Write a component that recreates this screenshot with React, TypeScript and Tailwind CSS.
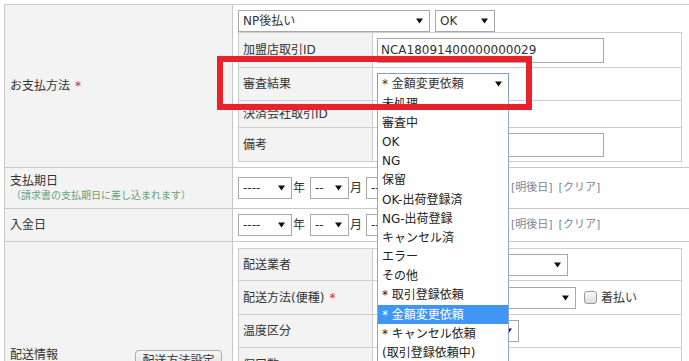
import React from 'react';

type SelectProps = { value: string; className?: string; focused?: boolean };

const Select: React.FC<SelectProps> = ({ value, className = '', focused = false }) => {
  return (
    <div
      className={`flex h-[22px] shrink-0 items-center justify-between bg-white pl-[4px] pr-[6px] border ${
        focused ? 'border-[#7c9fd6]' : 'border-[#a8a8a8]'
      } ${className}`}
    >
      <span className="overflow-hidden whitespace-nowrap">{value}</span>
      <svg width="7" height="6" viewBox="0 0 7 6" className="shrink-0">
        <path d="M0 0.5h7L3.5 5.5z" fill="#111" />
      </svg>
    </div>
  );
};

const Req = () => <span className="ml-[5px] text-[#e3212b]">*</span>;

type RowProps = { label: string; req?: boolean; h: string; children?: React.ReactNode };

const NRow: React.FC<RowProps> = ({ label, req, h, children }) => {
  return (
    <div className={`grid grid-cols-[134px_1fr] ${h}`}>
      <div className="flex items-center border-b border-r border-[#cdcdcd] bg-[#f2f3f2] pl-[4px]">
        {label}
        {req && <Req />}
      </div>
      <div className="flex items-center border-b border-r border-[#cdcdcd] pl-[4px]">{children}</div>
    </div>
  );
};

const DateRow = () => (
  <div className="flex items-center pl-[5px]">
    <div className="flex w-[273px] shrink-0 items-center overflow-hidden whitespace-nowrap">
      <Select value="----" className="w-[54px]" />
      <span className="ml-[1px]">年</span>
      <Select value="--" className="ml-[5px] w-[39px]" />
      <span className="ml-[1px]">月</span>
      <Select value="--" className="ml-[4px] w-[39px]" />
      <span className="ml-[1px]">日</span>
    </div>
    <span className="text-[11px] text-[#7a8497]">[明後日]</span>
    <span className="ml-[6px] text-[11px] text-[#7a8497]">[クリア]</span>
  </div>
);

const options = [
  '未処理',
  '審査中',
  'OK',
  'NG',
  '保留',
  'OK-出荷登録済',
  'NG-出荷登録',
  'キャンセル済',
  'エラー',
  'その他',
  '* 取引登録依頼',
  '* 金額変更依頼',
  '* キャンセル依頼',
  '(取引登録依頼中)',
];

export default function App() {
  return (
    <div className="relative h-[361px] w-[689px] overflow-hidden bg-white font-['DejaVu_Sans','Noto_Sans_CJK_JP',sans-serif] text-[12px] text-[#333]">
      <div className="ml-[4px] mt-[4px] w-[690px] border-l border-t border-[#c8c8c8]">
        {/* お支払方法 */}
        <div className="grid grid-cols-[228px_1fr]">
          <div className="flex items-center border-b border-r border-[#c8c8c8] bg-[#f2f3f2] pl-[5px]">
            お支払方法
            <Req />
          </div>
          <div className="border-b border-[#c8c8c8] px-[5px] py-[5px]">
            <div className="flex gap-[5px]">
              <Select value="NP後払い" className="w-[192px]" />
              <Select value="OK" className="w-[60px]" />
            </div>
            <div className="w-[444px] border-l border-t border-[#cdcdcd]">
              <NRow label="加盟店取引ID" h="h-[35px]">
                <div className="flex h-[25px] w-[227px] items-center border border-[#a8a8a8] pl-[3px]">
                  NCA18091400000000029
                </div>
              </NRow>
              <NRow label="審査結果" h="h-[33px]">
                <Select value="* 金額変更依頼" className="w-[132px]" focused />
              </NRow>
              <NRow label="決済会社取引ID" h="h-[27px]" />
              <NRow label="備考" h="h-[34px]">
                <div className="h-[24px] w-[227px] border border-[#a8a8a8]" />
              </NRow>
            </div>
          </div>
        </div>

        {/* 支払期日 */}
        <div className="grid h-[41px] grid-cols-[228px_1fr]">
          <div className="flex flex-col justify-center border-b border-r border-[#c8c8c8] bg-[#f2f3f2] pl-[5px]">
            <span className="leading-[15px]">支払期日</span>
            <span className="pl-[1px] text-[10px] leading-[13px] text-[#6c9e74]">（請求書の支払期日に差し込まれます）</span>
          </div>
          <div className="flex items-center border-b border-[#c8c8c8]">
            <DateRow />
          </div>
        </div>

        {/* 入金日 */}
        <div className="grid h-[33px] grid-cols-[228px_1fr]">
          <div className="flex items-center border-b border-r border-[#c8c8c8] bg-[#f2f3f2] pl-[5px]">入金日</div>
          <div className="flex items-center border-b border-[#c8c8c8]">
            <DateRow />
          </div>
        </div>

        {/* 配送情報 */}
        <div className="grid grid-cols-[228px_1fr]">
          <div className="flex items-center border-b border-r border-[#c8c8c8] bg-[#f2f3f2] pl-[5px] pr-[10px]">
            <div className="flex w-full items-start justify-between">
              <span className="leading-[16px]">配送情報</span>
              <button className="mt-[3px] h-[22px] w-[87px] rounded-[4px] border border-[#ababab] bg-gradient-to-b from-[#f7f7f7] to-[#dedede] text-[12px] text-[#333]">
                配送方法設定
              </button>
            </div>
          </div>
          <div className="border-b border-[#c8c8c8] py-[6px] pl-[5px]">
            <div className="w-[444px] border-l border-t border-[#cdcdcd]">
              <NRow label="配送業者" h="h-[32px]">
                <Select value="ヤマト運輸" className="w-[191px]" />
              </NRow>
              <NRow label="配送方法(便種)" req h="h-[34px]">
                <Select value="宅急便" className="w-[199px]" />
                <span className="ml-[8px] h-[13px] w-[13px] rounded-[3px] border border-[#9a9a9a] bg-gradient-to-b from-[#fafafa] to-[#dcdcdc]" />
                <span className="ml-[4px]">着払い</span>
              </NRow>
              <NRow label="温度区分" h="h-[33px]">
                <Select value="常温" className="w-[142px]" />
              </NRow>
              <NRow label="個口数" h="h-[34px]" />
              <NRow label="送り状番号" h="h-[34px]" />
              <NRow label="配達希望日" h="h-[54px]" />
            </div>
          </div>
        </div>
      </div>

      {/* open dropdown list */}
      <div className="absolute left-[377px] top-[94px] z-10 w-[132px] border-x border-b border-[#8ea6cc] bg-white">
        {options.map((o) => (
          <div
            key={o}
            className={`flex h-[19.2px] items-center whitespace-nowrap pl-[4px] ${
              o === '* 金額変更依頼' ? 'bg-[#4096f5] text-white' : 'text-[#222]'
            }`}
          >
            {o}
          </div>
        ))}
      </div>

      {/* highlight box */}
      <div className="absolute left-[217px] top-[56px] z-20 h-[54px] w-[315px] border-[6px] border-[#e8212b]" />
    </div>
  );
}
